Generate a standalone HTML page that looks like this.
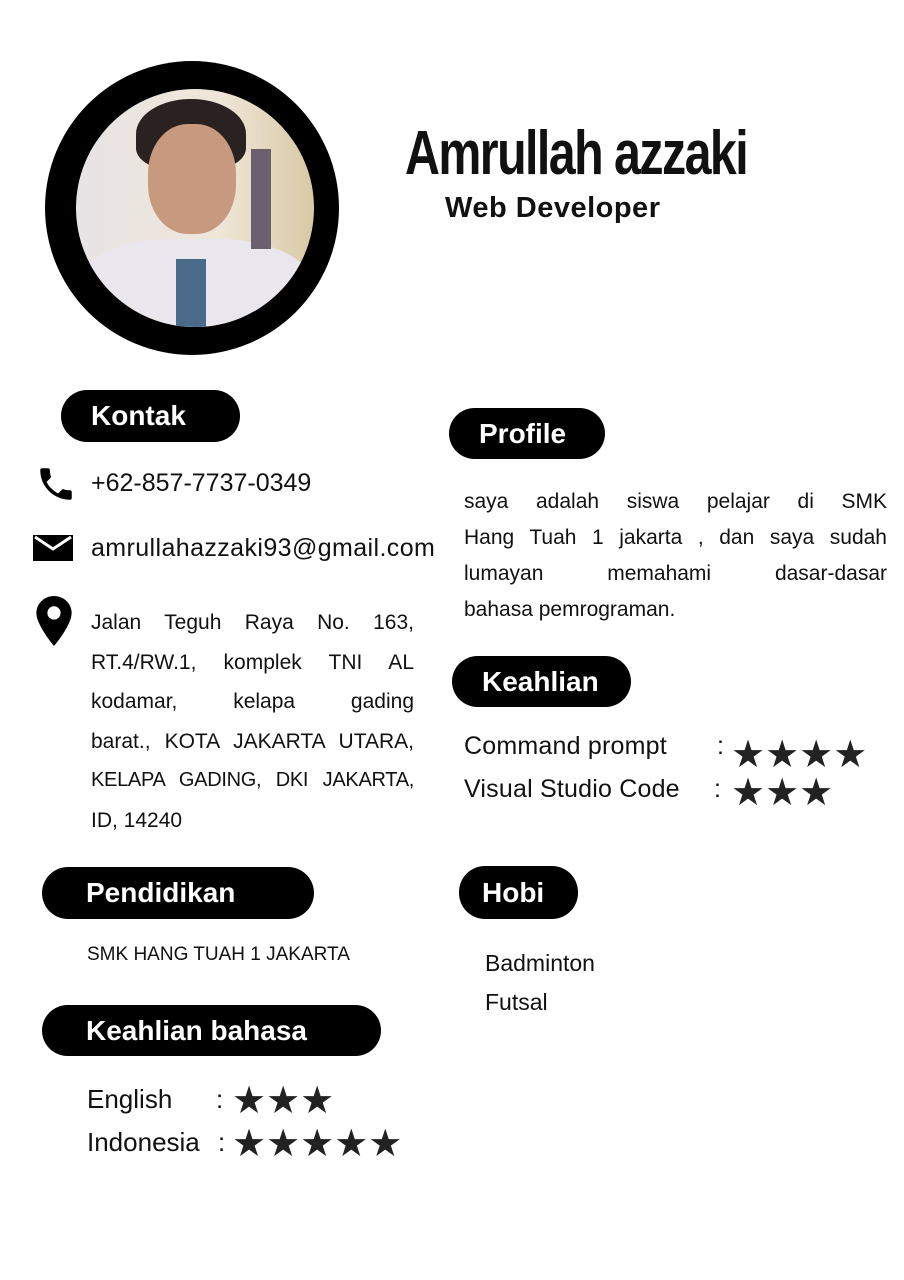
<!DOCTYPE html>
<html><head><meta charset="utf-8"><style>
*{margin:0;padding:0;box-sizing:border-box}
body{width:904px;height:1280px;background:#fff;position:relative;font-family:"Liberation Sans",sans-serif;color:#111;overflow:hidden}
.a{position:absolute;white-space:nowrap}
.pill{position:absolute;background:#000;color:#fff;border-radius:26px;font-weight:bold;font-size:28px;padding-left:30px;display:flex;align-items:center}
.t{position:absolute;font-size:22px;color:#111;white-space:nowrap}
.j{text-align:justify;text-align-last:justify;white-space:normal}
.st{position:absolute;font-size:38px;line-height:38px;letter-spacing:0px;color:#222}
</style></head><body>
<div class="a" style="left:45px;top:61px;width:294px;height:294px;border-radius:50%;background:#000"></div>
<div class="a" style="left:76px;top:89px;width:238px;height:238px;border-radius:50%;overflow:hidden;background:linear-gradient(90deg,#e8e4e6 0%,#efe6d8 60%,#d8c9a5 100%)">
 <div class="a" style="left:60px;top:10px;width:110px;height:70px;border-radius:50% 50% 30% 30%;background:#2a2220"></div>
 <div class="a" style="left:72px;top:35px;width:88px;height:110px;border-radius:45%;background:#c79a80"></div>
 <div class="a" style="left:0px;top:150px;width:238px;height:120px;border-radius:40% 40% 0 0;background:#e9e6ee"></div>
 <div class="a" style="left:100px;top:170px;width:30px;height:80px;background:#4a6a8a"></div>
 <div class="a" style="left:175px;top:60px;width:20px;height:100px;background:#6a6070"></div>
</div>
<div class="a" style="left:405px;top:118px;font-size:62px;font-weight:bold;letter-spacing:-2px;transform:scaleX(0.78);transform-origin:left;font-family:'Liberation Sans Narrow','Liberation Sans',sans-serif">Amrullah azzaki</div>
<div class="a" style="left:445px;top:192px;font-size:29px;font-weight:bold;letter-spacing:0.5px">Web Developer</div>

<div class="pill" style="left:61px;top:390px;width:179px;height:52px">Kontak</div>
<svg class="a" style="left:34px;top:463px" width="44" height="42" viewBox="0 0 24 24"><path d="M6.6 10.8c1.4 2.8 3.8 5.1 6.6 6.6l2.2-2.2c.3-.3.7-.4 1-.2 1.1.4 2.3.6 3.6.6.6 0 1 .4 1 1V20c0 .6-.4 1-1 1C10.6 21 3 13.4 3 4c0-.6.4-1 1-1h3.5c.6 0 1 .4 1 1 0 1.3.2 2.5.6 3.6.1.3 0 .7-.2 1z"/></svg>
<div class="t" style="left:91px;top:469px;font-size:25px">+62-857-7737-0349</div>
<svg class="a" style="left:33px;top:535px" width="40" height="26" viewBox="0 0 40 26"><rect width="40" height="26"/><path d="M2 2l18 12L38 2" stroke="#fff" stroke-width="3" fill="none"/></svg>
<div class="t" style="left:91px;top:534px;font-size:25px;letter-spacing:0.4px">amrullahazzaki93@gmail.com</div>
<svg class="a" style="left:36px;top:596px" width="36" height="50" viewBox="0 0 24 34"><path d="M12 0C5.4 0 0 5.2 0 11.6 0 20 12 34 12 34s12-14 12-22.4C24 5.2 18.6 0 12 0z"/><circle cx="12" cy="11.5" r="4.5" fill="#fff"/></svg>
<div class="t" style="left:91px;top:603px;width:323px;line-height:39.5px;white-space:normal;font-size:21px">
<div class="j">Jalan Teguh Raya No. 163,</div>
<div class="j">RT.4/RW.1, komplek TNI AL</div>
<div class="j">kodamar, kelapa gading</div>
<div class="j">barat., KOTA JAKARTA UTARA,</div>
<div class="j" style="font-size:20px;letter-spacing:-0.3px">KELAPA GADING, DKI JAKARTA,</div>
<div>ID, 14240</div></div>

<div class="pill" style="left:449px;top:408px;width:156px;height:51px">Profile</div>
<div class="t" style="left:464px;top:484px;width:423px;line-height:36px;white-space:normal;font-size:21px">
<div class="j">saya adalah siswa pelajar di SMK</div>
<div class="j">Hang Tuah 1 jakarta , dan saya sudah</div>
<div class="j">lumayan memahami dasar-dasar</div>
<div>bahasa pemrograman.</div></div>

<div class="pill" style="left:452px;top:656px;width:179px;height:51px">Keahlian</div>
<div class="t" style="left:464px;top:732px;font-size:25px;letter-spacing:0.2px">Command prompt</div>
<div class="t" style="left:717px;top:732px;font-size:25px">:</div>
<div class="st" style="left:731px;top:736px">★★★★</div>
<div class="t" style="left:464px;top:775px;font-size:25px;letter-spacing:0.2px">Visual Studio Code</div>
<div class="t" style="left:714px;top:775px;font-size:25px">:</div>
<div class="st" style="left:731px;top:774px">★★★</div>

<div class="pill" style="left:42px;top:867px;width:272px;height:52px;padding-left:44px">Pendidikan</div>
<div class="t" style="left:87px;top:944px;font-size:19px">SMK HANG TUAH 1 JAKARTA</div>

<div class="pill" style="left:459px;top:866px;width:119px;height:53px;padding-left:23px">Hobi</div>
<div class="t" style="left:485px;top:944px;font-size:23px;line-height:39px">Badminton<br>Futsal</div>

<div class="pill" style="left:42px;top:1005px;width:339px;height:51px;padding-left:44px">Keahlian bahasa</div>
<div class="t" style="left:87px;top:1084px;font-size:26px">English</div>
<div class="t" style="left:216px;top:1084px;font-size:26px">:</div>
<div class="st" style="left:232px;top:1082px">★★★</div>
<div class="t" style="left:87px;top:1127px;font-size:26px">Indonesia</div>
<div class="t" style="left:218px;top:1127px;font-size:26px">:</div>
<div class="st" style="left:232px;top:1125px">★★★★★</div>
</body></html>
